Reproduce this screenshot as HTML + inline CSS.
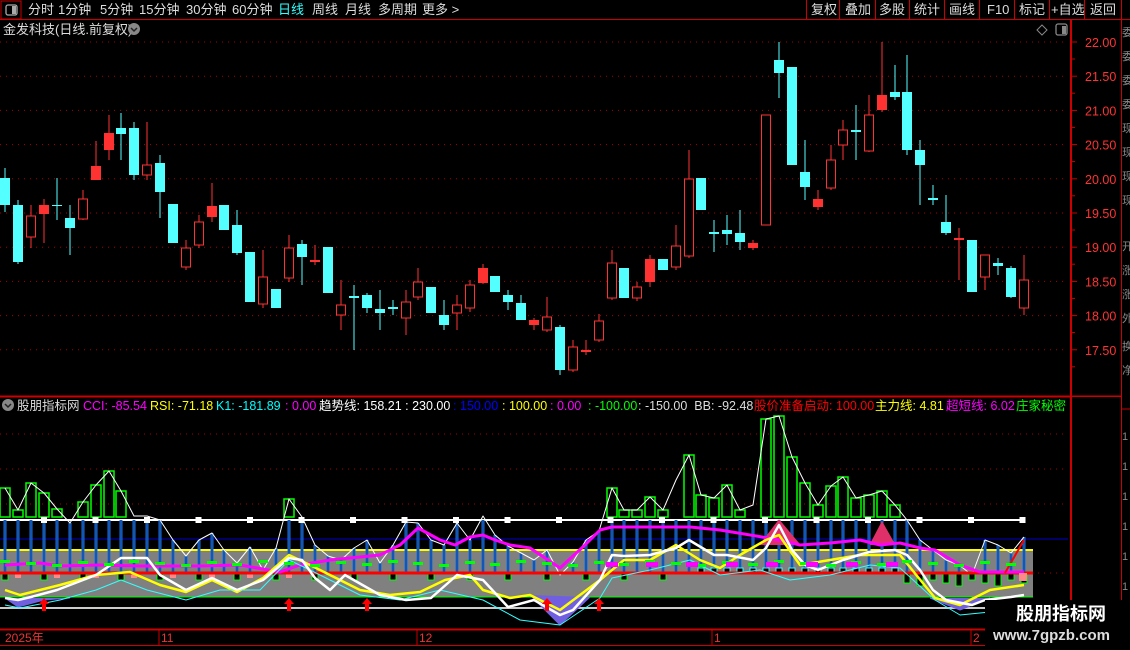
<!DOCTYPE html>
<html><head><meta charset="utf-8">
<style>
html,body{margin:0;padding:0;background:#000;width:1130px;height:650px;overflow:hidden;font-family:"Liberation Sans","Noto Sans CJK SC",sans-serif;}
svg{position:absolute;left:0;top:0}
text{font-family:"Liberation Sans","Noto Sans CJK SC",sans-serif;}
</style></head><body>
<svg id="s" width="1130" height="650" xmlns="http://www.w3.org/2000/svg">
<rect width="1130" height="650" fill="#000"/>
<rect x="1" y="1" width="20" height="18" fill="none" stroke="#c00"/>
<rect x="6" y="5" width="11" height="10" rx="2" fill="none" stroke="#aaa" stroke-width="1.3"/>
<rect x="12" y="6" width="4" height="8" fill="#aaa"/>
<line x1="0" y1="19.5" x2="1130" y2="19.5" stroke="#c00"/>
<g font-size="13" fill="#ddd">
<text x="28" y="14">分时</text><text x="58" y="14">1分钟</text><text x="100" y="14">5分钟</text><text x="139" y="14">15分钟</text><text x="186" y="14">30分钟</text><text x="232" y="14">60分钟</text>
<text x="278" y="14" fill="#3ff">日线</text><text x="312" y="14">周线</text><text x="345" y="14">月线</text><text x="378" y="14">多周期</text><text x="422" y="14">更多 &gt;</text>
</g>
<g stroke="#c00"><line x1="806.5" y1="0" x2="806.5" y2="19"/><line x1="839.5" y1="0" x2="839.5" y2="19"/><line x1="875.5" y1="0" x2="875.5" y2="19"/><line x1="909.5" y1="0" x2="909.5" y2="19"/><line x1="944.5" y1="0" x2="944.5" y2="19"/><line x1="979.5" y1="0" x2="979.5" y2="19"/><line x1="1014.5" y1="0" x2="1014.5" y2="19"/><line x1="1049.5" y1="0" x2="1049.5" y2="19"/><line x1="1084.5" y1="0" x2="1084.5" y2="19"/><line x1="1121.5" y1="0" x2="1121.5" y2="19"/></g>
<g font-size="13" fill="#ddd"><text x="811" y="14">复权</text><text x="845" y="14">叠加</text><text x="879" y="14">多股</text><text x="914" y="14">统计</text><text x="949" y="14">画线</text><text x="987" y="14">F10</text><text x="1019" y="14">标记</text><text x="1051" y="14">+自选</text><text x="1090" y="14">返回</text></g>
<text x="3" y="34" font-size="13" fill="#ddd">金发科技(日线.前复权)</text>
<circle cx="134" cy="29" r="6" fill="#888"/><path d="M131 28l3 3 3-3" stroke="#222" stroke-width="1.5" fill="none"/>
<path d="M1042 25l5 5-5 5-5-5z" fill="none" stroke="#888"/>
<rect x="1056" y="24" width="11" height="11" rx="2" fill="none" stroke="#888" stroke-width="1.3"/><rect x="1062" y="26" width="4" height="8" fill="#888"/>
<line x1="1071" y1="20" x2="1071" y2="650" stroke="#c00" stroke-width="2"/>
<line x1="1121.5" y1="20" x2="1121.5" y2="650" stroke="#c00"/>
<line x1="0" y1="396.5" x2="1121" y2="396.5" stroke="#c00" stroke-width="2"/>
<line x1="0" y1="629.5" x2="1071" y2="629.5" stroke="#c00" stroke-width="2"/>
<line x1="0" y1="645.5" x2="1071" y2="645.5" stroke="#c00"/>
<g id="g"></g>
<circle cx="8" cy="405" r="6" fill="#888"/><path d="M5 404l3 3 3-3" stroke="#222" stroke-width="1.5" fill="none"/>
<text y="410" font-size="12.5" xml:space="preserve"><tspan x="17" fill="#ddd">股朋指标网</tspan><tspan x="83" fill="#f0f">CCI: -85.54</tspan><tspan x="150" fill="#ff0">RSI: -71.18</tspan><tspan x="216" fill="#0ff">K1: -181.89</tspan><tspan x="285" fill="#f0f">: 0.00</tspan><tspan x="319" fill="#fff">趋势线: 158.21 : 230.00</tspan><tspan x="453" fill="#00f">: 150.00</tspan><tspan x="502" fill="#ff0">: 100.00</tspan><tspan x="550" fill="#f0f">: 0.00</tspan><tspan x="588" fill="#0f0">: -100.00</tspan><tspan x="638" fill="#ddd">: -150.00  BB: -92.48</tspan><tspan x="754" fill="#f00">股价准备启动: 100.00</tspan><tspan x="875" fill="#ff0">主力线: 4.81</tspan><tspan x="946" fill="#f0f">超短线: 6.02</tspan><tspan x="1016" fill="#0f0">庄家秘密</tspan></text>
<rect x="1071" y="397" width="50" height="232" fill="#000"/>
<line x1="1071" y1="397" x2="1071" y2="650" stroke="#c00" stroke-width="2"/>
<g font-size="12" fill="#e33"><text x="5" y="642">2025年</text><text x="161" y="642">11</text><text x="419" y="642">12</text><text x="714" y="642">1</text><text x="973" y="642">2</text></g>
<g stroke="#c00"><line x1="159" y1="630" x2="159" y2="645"/><line x1="417" y1="630" x2="417" y2="645"/><line x1="712" y1="630" x2="712" y2="645"/><line x1="971" y1="630" x2="971" y2="645"/></g>
<g font-size="11" fill="#888"><text x="1122" y="36">委</text><text x="1122" y="60">委</text><text x="1122" y="84">委</text><text x="1122" y="108">委</text><text x="1122" y="132">现</text><text x="1122" y="156">现</text><text x="1122" y="180">现</text><text x="1122" y="204">现</text><text x="1122" y="250">开</text><text x="1122" y="274">涨</text><text x="1122" y="298">涨</text><text x="1122" y="322">外</text><text x="1122" y="350">换</text><text x="1122" y="374">净</text><text x="1122" y="440">1</text><text x="1122" y="470">1</text><text x="1122" y="500">1</text><text x="1122" y="530">1</text><text x="1122" y="560">1</text><text x="1122" y="590">1</text></g>
<line x1="1121" y1="409" x2="1130" y2="409" stroke="#c00"/>
<rect x="985" y="600" width="145" height="50" fill="#000"/>
<text x="1016" y="620" font-size="18" font-weight="bold" fill="#fff">股朋指标网</text>
<text x="993" y="640" font-size="15" font-weight="bold" fill="#ddd">www.7gpzb.com</text>
</svg>
<script>
(function(){
var g=document.getElementById('g'),h='';
function L(x1,y1,x2,y2,c,w,d){h+='<line x1="'+x1+'" y1="'+y1+'" x2="'+x2+'" y2="'+y2+'" stroke="'+c+'" stroke-width="'+(w||1)+'"'+(d?' stroke-dasharray="'+d+'"':'')+'/>';}
function P(pts,c,w,f){h+='<polyline points="'+pts+'" fill="'+(f||'none')+'" stroke="'+c+'" stroke-width="'+(w||1)+'" stroke-linejoin="round"/>';}
var pl=['22.00','21.50','21.00','20.50','20.00','19.50','19.00','18.50','18.00','17.50'];
for(var i=0;i<pl.length;i++){var y=42+i*34.2;L(0,y,1068,y,'#a00',1,'1 5');L(1071,y,1077,y,'#c00');L(1071,y+17,1075,y+17,'#c00');h+='<text x="1085" y="'+(y+5)+'" font-size="12.5" fill="#f33">'+pl[i]+'</text>';}
var il=[['600.0',434],['450.0',469],['300.0',504],['150.0',539],['0.00',573]];
for(i=0;i<il.length;i++){var y=il[i][1];L(0,y,1068,y,'#a00',1,'1 5');L(1071,y,1077,y,'#c00');L(1071,y+17,1075,y+17,'#c00');h+='<text x="'+(il[i][0]=='0.00'?1093:1086)+'" y="'+(y+5)+'" font-size="12.5" fill="#f33">'+il[i][0]+'</text>';}
var C=[[5,178,205,168,212,'c'],[18,205,262,200,264,'c'],[31,216,237,205,248,'r'],[44,205,214,199,243,'R'],[57,205,206,178,220,'c'],[70,218,228,205,255,'c'],[83,199,219,190,220,'r'],[96,166,180,141,180,'R'],[109,133,150,115,160,'R'],[121,128,134,113,160,'c'],[134,128,175,122,180,'c'],[147,165,175,122,180,'r'],[160,163,192,155,218,'c'],[173,204,243,204,243,'c'],[186,248,267,240,270,'r'],[199,222,245,215,248,'r'],[212,206,217,183,222,'R'],[224,205,230,205,230,'c'],[237,225,253,210,255,'c'],[250,252,302,252,302,'c'],[263,277,304,250,308,'r'],[276,289,308,289,308,'c'],[289,248,278,235,282,'r'],[302,244,257,240,285,'c'],[315,260,262,245,265,'R'],[328,247,293,247,293,'c'],[341,305,315,280,330,'r'],[354,296,298,285,350,'c'],[367,295,308,293,313,'c'],[380,309,313,290,330,'c'],[393,307,309,300,315,'c'],[406,302,318,290,335,'r'],[418,282,297,268,300,'r'],[431,287,313,287,313,'c'],[444,315,325,300,330,'c'],[457,305,313,295,330,'r'],[470,285,308,280,312,'r'],[483,268,283,264,284,'R'],[495,276,292,276,292,'c'],[508,295,302,290,310,'c'],[521,303,320,295,320,'c'],[534,320,325,318,330,'R'],[547,317,330,297,332,'r'],[560,327,370,325,375,'c'],[573,347,370,340,372,'r'],[586,350,352,340,355,'R'],[599,321,340,314,342,'r'],[612,263,298,250,300,'r'],[624,268,298,268,298,'c'],[637,287,298,282,301,'r'],[650,259,282,255,287,'R'],[663,259,270,259,270,'c'],[676,246,267,225,270,'r'],[689,179,256,150,258,'r'],[701,178,210,178,210,'c'],[714,232,234,220,252,'c'],[727,230,234,215,245,'c'],[740,233,242,210,250,'c'],[753,243,248,240,250,'R'],[766,115,225,115,225,'r'],[779,60,73,42,98,'c'],[792,67,165,67,165,'c'],[805,172,187,140,200,'c'],[818,199,207,190,210,'R'],[831,160,188,145,190,'r'],[843,130,145,120,160,'r'],[856,130,132,105,160,'c'],[869,115,151,95,152,'r'],[882,95,110,42,112,'R'],[895,92,97,65,100,'c'],[907,92,150,55,155,'c'],[920,150,165,140,205,'c'],[933,198,200,185,205,'c'],[946,222,233,195,235,'c'],[959,238,240,228,280,'R'],[972,240,292,240,292,'c'],[985,255,277,255,290,'r'],[998,263,266,258,275,'c'],[1011,268,297,266,298,'c'],[1024,280,308,255,315,'r']];
for(i=0;i<C.length;i++){var c=C[i],x=c[0],col=c[5]=='c'?'#54ffff':'#ff3232';
L(x,c[3],x,c[4],col);var hh=Math.max(1,c[2]-c[1]);
if(c[5]=='r')h+='<rect x="'+(x-4.5)+'" y="'+c[1]+'" width="9" height="'+hh+'" fill="#000" stroke="'+col+'"/>';
else h+='<rect x="'+(x-5)+'" y="'+c[1]+'" width="10" height="'+hh+'" fill="'+col+'"/>';}
h+='<rect x="0" y="550" width="1033" height="47" fill="#808080"/>';
L(0,550,1033,550,'#ff0',2);L(0,539,1068,539,'#00c',1);L(0,520,1025,520,'#fff',2);L(0,597,1033,597,'#0f0',1);L(0,608,985,608,'#ccc',2);
var W=[[5,488],[18,510],[31,483],[44,493],[57,509],[70,523],[83,502],[96,485],[109,471],[121,491],[134,516],[147,516],[160,520],[173,540],[186,556],[199,540],[212,533],[224,550],[237,563],[250,547],[263,570],[276,548],[289,499],[302,517],[315,545],[328,556],[341,560],[354,548],[367,540],[380,563],[393,545],[406,522],[418,523],[431,540],[444,545],[457,523],[470,540],[483,516],[495,535],[508,546],[521,553],[534,560],[547,550],[560,575],[573,562],[586,540],[599,531],[612,488],[624,510],[637,510],[650,497],[663,510],[676,480],[689,455],[701,495],[714,498],[727,485],[740,510],[753,505],[766,419],[779,416],[792,457],[805,483],[818,505],[831,486],[843,477],[856,498],[869,495],[882,491],[895,505],[907,520],[920,540],[933,550],[946,560],[959,565],[972,575],[985,540],[998,545],[1011,553],[1024,537]];
var G={5:1,18:1,31:1,44:1,57:1,83:1,96:1,109:1,121:1,289:1,612:1,624:1,637:1,650:1,663:1,689:1,701:1,714:1,727:1,740:1,766:1,779:1,792:1,805:1,818:1,831:1,843:1,856:1,869:1,882:1,895:1};
for(i=0;i<W.length;i++){var x=W[i][0],y=W[i][1],ty=Math.max(520,y);
if(ty<570)h+='<rect x="'+(x-1.5)+'" y="'+ty+'" width="3" height="'+(573-ty)+'" fill="#1a6fd8"/><rect x="'+(x-0.5)+'" y="'+ty+'" width="1" height="'+(573-ty)+'" fill="#0a3f98"/>';
if(G[x]&&y<517)h+='<rect x="'+(x-5)+'" y="'+y+'" width="10" height="'+(517-y)+'" fill="none" stroke="#0f0" stroke-width="1.5"/>';}
for(x=44;x<1030;x+=51.5)h+='<rect x="'+(x-3)+'" y="517" width="6" height="6" fill="#fff"/>';
var Ws=W.map(function(p){return p.join(',')}).join(' ');
P(Ws,'#fff',1);
P('5,598 18,607 44,600 70,598','#7060e0',1,'#7060e0');
P('530,595 560,625 590,597','#7060e0',1,'#7060e0');
P('930,598 960,610 990,598','#7060e0',1,'#7060e0');
P('760,545 779,520 800,545','#e0306a',1,'#e0306a');
P('870,545 882,522 895,545','#e0306a',1,'#e0306a');
for(i=0;i<W.length;i++){var x=W[i][0];
if(x<700&&(i%3==0))h+='<rect x="'+(x-3)+'" y="573" width="6" height="7" fill="#000" stroke="#0f0"/>';
else if(x<300&&i%3==1)h+='<rect x="'+(x-3)+'" y="573" width="6" height="5" fill="#f88"/>';
else if(x>=700&&x<900)h+='<rect x="'+(x-3)+'" y="568" width="6" height="6" fill="#000" stroke="#3ff"/>';
else if(x>=900&&x<1030)h+='<rect x="'+(x-3)+'" y="574" width="6" height="'+(6+(i%3)*3)+'" fill="#000" stroke="#0f0"/>';}
L(0,573,1033,573,'#f00',3);
P('5,565 40,563 60,566 100,565 140,566 200,566 240,565 280,572 300,565 330,560 380,555 400,545 418,528 440,540 455,545 470,537 483,535 495,540 510,545 530,548 560,568 585,545 600,530 612,527 690,527 720,530 780,540 800,545 830,543 860,540 880,545 900,543 920,548 935,550 960,565 980,572 1024,572','#f0f',3);
P('5,590 20,595 60,585 96,575 130,572 160,585 186,592 212,580 237,592 263,578 289,555 310,565 330,575 360,590 390,595 420,592 445,580 470,575 483,590 510,598 530,595 560,610 600,580 624,560 650,560 676,545 700,560 720,568 740,555 766,540 779,535 800,565 830,560 860,555 900,555 935,598 960,605 990,590 1024,585','#ff0',2.5);
P('5,605 20,608 60,600 96,590 121,580 147,590 186,600 220,590 260,590 289,560 310,570 330,580 360,595 400,600 440,590 483,600 520,620 560,625 600,598 612,578 650,570 690,560 720,575 760,570 790,580 830,575 870,565 900,568 935,600 960,615 990,612 1024,610','#3ff',1);
P('5,598 18,600 31,597 57,590 96,575 121,558 147,558 160,575 186,590 212,578 237,590 263,580 289,558 302,560 315,578 330,590 345,575 380,595 406,600 431,598 457,575 483,580 508,607 534,600 560,615 573,610 600,580 612,555 624,556 650,555 676,548 689,540 714,555 727,555 753,560 766,548 779,525 792,550 805,565 818,570 843,560 869,552 895,550 907,555 920,570 933,590 946,600 972,605 985,600 1011,597 1024,595','#fff',2.5);
P('1005,573 1024,540','#f00',2);
for(i=0;i<W.length;i+=2){var x=W[i][0];h+='<rect x="'+(x-5)+'" y="'+(560+(i%5))+'" width="10" height="3" fill="#0f0"/>';}
for(x=612;x<900;x+=40)h+='<rect x="'+(x-6)+'" y="562" width="12" height="5" fill="#f0f"/>';
h+='<rect x="1019" y="573" width="8" height="8" fill="#f88"/>';
[44,289,367,547,599].forEach(function(x){h+='<path d="M'+x+' 598l-5 6h3v7h4v-7h3z" fill="#f00"/>';});
h+='<rect x="1071" y="508" width="50" height="15" fill="#000080" stroke="#c00"/><text x="1072" y="520" font-size="12" fill="#ddd">217.66</text>';
g.innerHTML=h;
})();
</script>
</body></html>
